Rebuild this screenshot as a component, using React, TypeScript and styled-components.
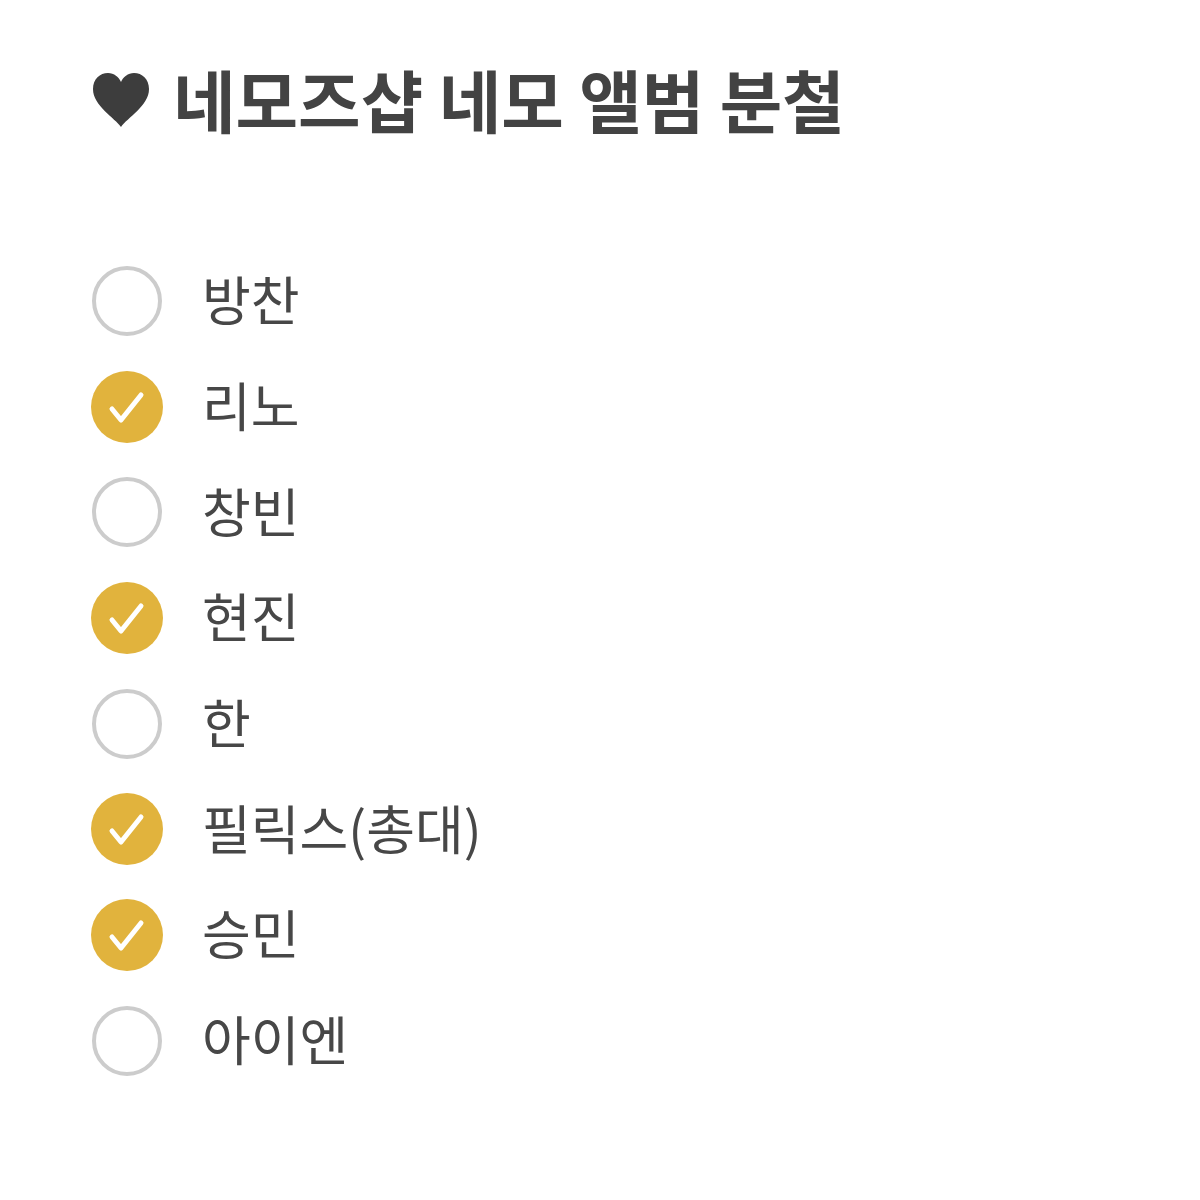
import React from "react";
import styled, { createGlobalStyle } from "styled-components";

const GlobalStyle = createGlobalStyle`
  body {
    margin: 0;
    background: #ffffff;
    font-family: "Noto Sans CJK KR", "Noto Sans", sans-serif;
  }
`;

const Page = styled.div`
  width: 1200px;
  height: 1200px;
  padding: 60px 0 0 91px;
  box-sizing: border-box;
  overflow: hidden;
`;

const Heading = styled.h1`
  display: flex;
  align-items: center;
  gap: 22px;
  height: 80px;
  margin: 0;
  font-size: 68px;
  font-weight: 700;
  color: #434343;
`;

const HeadingText = styled.span`
  line-height: 1;
  transform: translateY(-1px);
`;

const List = styled.ul`
  list-style: none;
  margin: 108px 0 0;
  padding: 0;
`;

const Row = styled.li`
  display: flex;
  align-items: center;
  gap: 39px;
  height: 105.7px;
`;

const Circle = styled.span<{ checked: boolean }>`
  box-sizing: border-box;
  border-radius: 50%;
  flex: none;
  display: flex;
  align-items: center;
  justify-content: center;
  width: ${(p) => (p.checked ? "72px" : "70px")};
  height: ${(p) => (p.checked ? "72px" : "70px")};
  margin: ${(p) => (p.checked ? "0" : "0 1px")};
  background: ${(p) => (p.checked ? "#e1b33d" : "transparent")};
  border: ${(p) => (p.checked ? "none" : "4px solid #cccccc")};
`;

const Label = styled.span`
  font-size: 53px;
  font-weight: 400;
  color: #474747;
  line-height: 1;
  transform: translateY(-2px);
`;

const Heart = () => (
  <svg width="60" height="56" viewBox="0 0 60 56">
    <path
      d="M30 55 C24 46 2 34 2 17 C2 7 9 1 17 1 C23 1 28 5 30 10 C32 5 37 1 43 1 C51 1 58 7 58 17 C58 34 36 46 30 55 Z"
      fill="#3d3d3d"
    />
  </svg>
);

const Check = () => (
  <svg width="72" height="72" viewBox="0 0 72 72">
    <path
      d="M21 38 L30 49 L50 24"
      fill="none"
      stroke="#ffffff"
      strokeWidth="5"
      strokeLinecap="round"
      strokeLinejoin="round"
    />
  </svg>
);

const items: { name: string; checked: boolean }[] = [
  { name: "방찬", checked: false },
  { name: "리노", checked: true },
  { name: "창빈", checked: false },
  { name: "현진", checked: true },
  { name: "한", checked: false },
  { name: "필릭스(총대)", checked: true },
  { name: "승민", checked: true },
  { name: "아이엔", checked: false },
];

export default function App() {
  return (
    <>
      <GlobalStyle />
      <Page>
        <Heading>
          <Heart />
          <HeadingText>네모즈샵 네모 앨범 분철</HeadingText>
        </Heading>
        <List>
          {items.map((it) => (
            <Row key={it.name}>
              <Circle checked={it.checked}>{it.checked && <Check />}</Circle>
              <Label>{it.name}</Label>
            </Row>
          ))}
        </List>
      </Page>
    </>
  );
}
